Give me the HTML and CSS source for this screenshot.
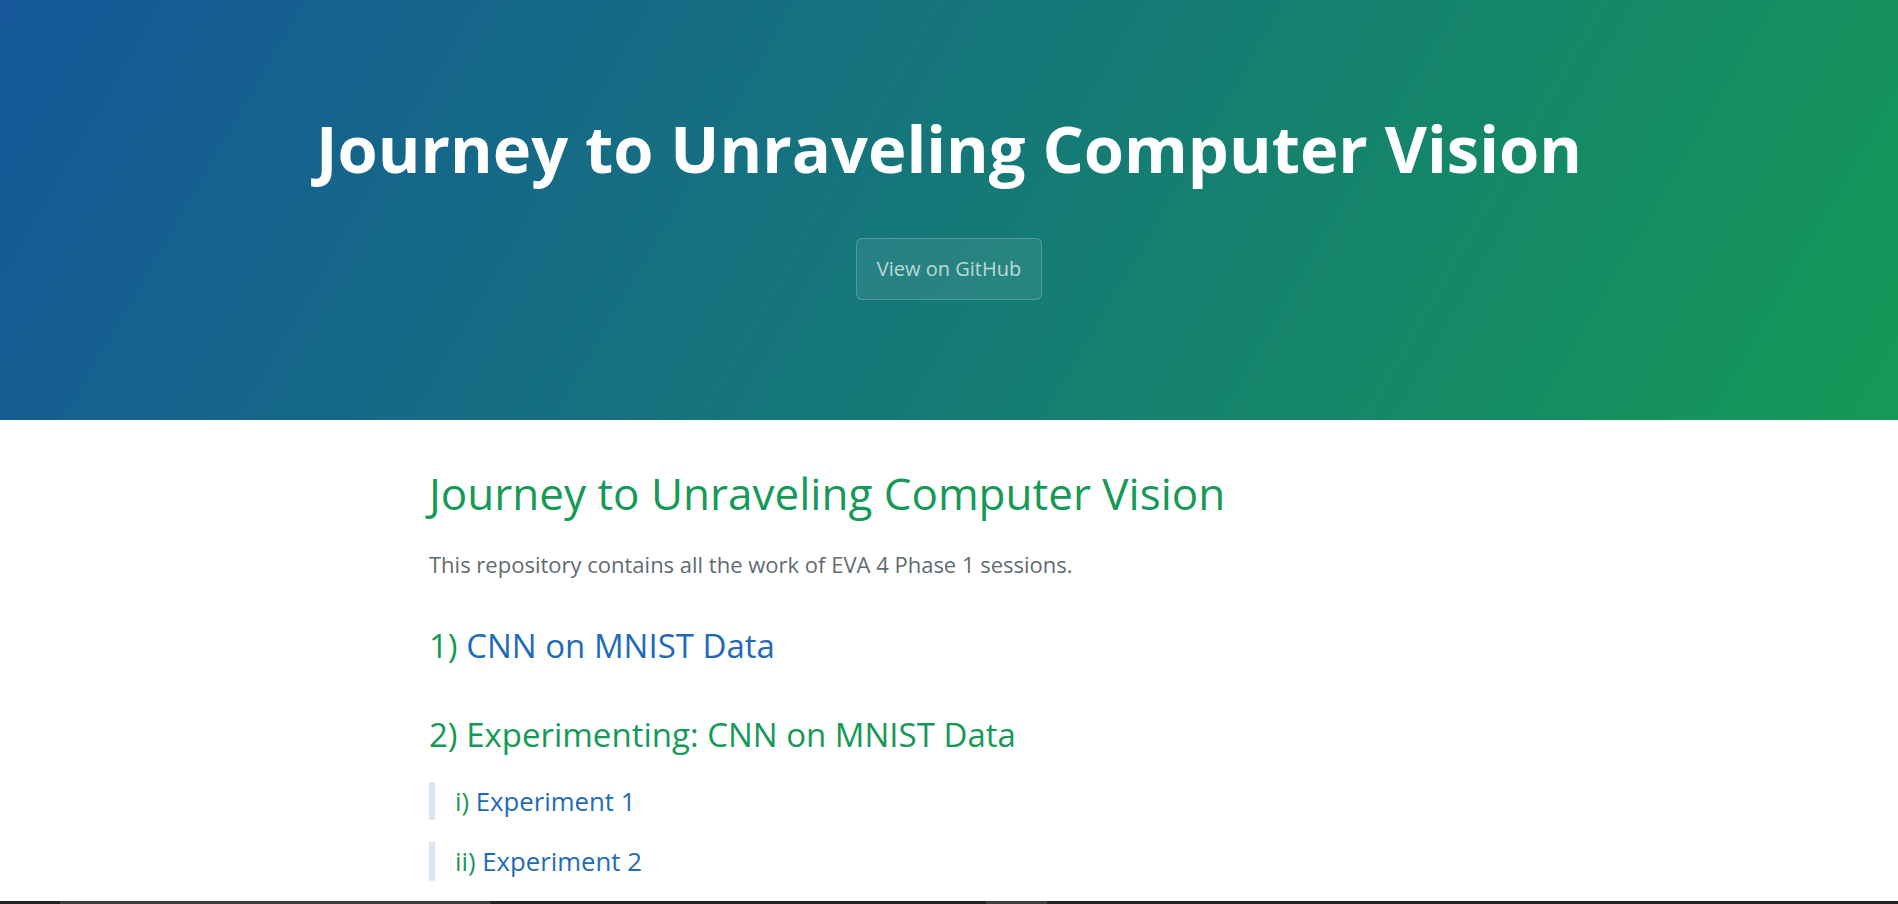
FILE: index.html
```html
<!DOCTYPE html>
<html lang="en">
<head>
<meta charset="UTF-8">
<title>Journey to Unraveling Computer Vision</title>
<link rel="stylesheet" href="styles.css">
</head>
<body>
<section class="page-header">
  <h1 class="project-name">Journey to Unraveling Computer Vision</h1>
  <h2 class="project-tagline"></h2>
  <a href="#" class="btn">View on GitHub</a>
</section>
<main class="main-content">
  <h1 class="page-title">Journey to Unraveling Computer Vision</h1>
  <p>This repository contains all the work of EVA 4 Phase 1 sessions.</p>
  <h2>1) <a href="#">CNN on MNIST Data</a></h2>
  <h2>2) Experimenting: CNN on MNIST Data</h2>
  <blockquote>
    <h3>i) <a href="#">Experiment 1</a></h3>
  </blockquote>
  <blockquote>
    <h3>ii) <a href="#">Experiment 2</a></h3>
  </blockquote>
</main>
<div class="bottom-strip"></div>
</body>
</html>
```
FILE: styles.css
```css
* {
  box-sizing: border-box;
}
html {
  font-size: 20px;
  overflow: hidden;
}
body {
  margin: 0;
  padding: 0;
  font-family: "Open Sans", "Helvetica Neue", Helvetica, Arial, sans-serif;
  font-size: 20px;
  line-height: 1.5;
  color: #606c71;
  background: #fff;
}
a {
  color: #1e6bb8;
  text-decoration: none;
}
.page-header {
  color: #fff;
  text-align: center;
  background-color: #159957;
  background-image: linear-gradient(120deg, #155799, #159957);
  padding: 5rem 6rem;
}
.project-name {
  margin: 0 0 0.1rem;
  font-size: 3.25rem;
  font-weight: 700;
  line-height: 1.5;
}
.project-tagline {
  margin: 0 0 2rem;
  font-size: 1.25rem;
  font-weight: normal;
  opacity: 0.7;
}
.btn {
  display: inline-block;
  margin-bottom: 1rem;
  padding: 0.75rem 1rem;
  color: rgba(255, 255, 255, 0.7);
  background-color: rgba(255, 255, 255, 0.08);
  border: 1px solid rgba(255, 255, 255, 0.2);
  border-radius: 0.3rem;
  font-size: 1rem;
}
.main-content {
  max-width: 64rem;
  padding: 2rem 6rem;
  margin: 0 auto;
  font-size: 1.1rem;
  word-wrap: break-word;
}
.main-content h1,
.main-content h2,
.main-content h3 {
  margin-top: 2rem;
  margin-bottom: 1rem;
  font-weight: normal;
  color: #159957;
}
.main-content .page-title {
  margin-top: 0;
  font-size: 2em;
}
.main-content p {
  margin: 1em 0;
}
.main-content h2 {
  font-size: 1.5em;
}
.main-content h3 {
  font-size: 1.17em;
}
.main-content blockquote {
  margin: 1em 0;
  padding: 0 1rem;
  color: #819198;
  border-left: 0.3rem solid #dce6f0;
}
.main-content blockquote > h3 {
  margin-top: 0;
  margin-bottom: 0;
}
.bottom-strip {
  position: fixed;
  left: 0;
  right: 0;
  bottom: 0;
  height: 3px;
  background: linear-gradient(to right,
    #1d2326 0, #1d2326 60px,
    #3c3c3c 60px, #3c3c3c 490px,
    #1d2326 490px, #1d2326 986px,
    #3b4043 986px, #3b4043 1047px,
    #1d2326 1047px);
}
```
